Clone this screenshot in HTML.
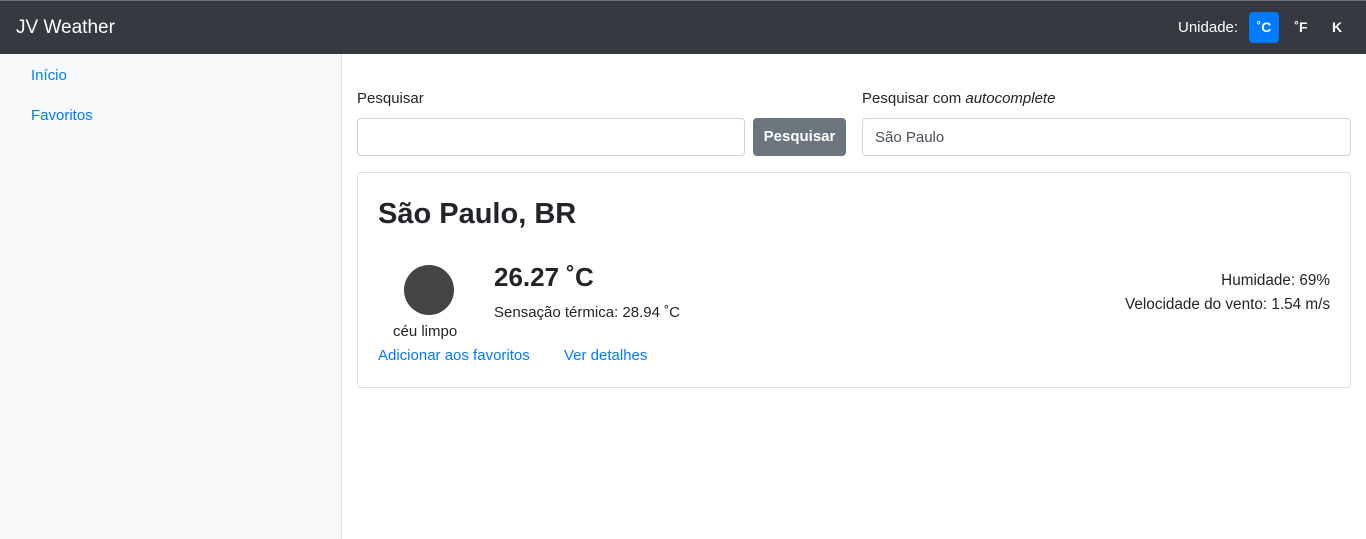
<!DOCTYPE html>
<html><head><meta charset="utf-8"><style>
*{box-sizing:border-box;margin:0;padding:0}
body{width:1366px;height:539px;overflow:hidden;font-family:"Liberation Sans",sans-serif;font-size:15px;color:#212529;background:#fff;position:relative}
.nav{position:absolute;left:0;top:0;width:1366px;height:54px;background:#343a40;border-top:1px solid #6c7177}
.brand{position:absolute;left:16px;top:16px;color:#fff;font-size:19px}
.unid{position:absolute;left:1178px;top:18px;color:#fff;font-size:15px}
.u{position:absolute;top:11px;width:30px;height:31px;border-radius:4px;color:#fff;font-weight:bold;font-size:14px;text-align:center;line-height:31px}
.side{position:absolute;left:0;top:54px;width:342px;height:485px;background:#f8f9fa;border-right:1px solid #dee2e6}
.side a{position:absolute;left:31px;color:#007bff;text-decoration:none;font-size:15px}
.lbl{position:absolute;top:90px;font-size:15px}
.inp{position:absolute;top:118px;height:38px;border:1px solid #ced4da;border-radius:4px;background:#fff;padding:0 12px;line-height:38px;font-size:15px;color:#495057}
.btn{position:absolute;left:753px;top:118px;width:93px;height:38px;background:#6c757d;border-radius:4px;color:#fff;font-size:15px;text-align:center;line-height:38px;font-weight:bold}
.card{position:absolute;left:357px;top:172px;width:994px;height:216px;border:1px solid #dfdfdf;border-radius:4px}
.a{color:#007bff;position:absolute;font-size:15px}
</style></head><body>
<div class="nav"><div class="brand">JV Weather</div><div class="unid">Unidade:</div>
<div class="u" style="left:1249px;background:#007bff">˚C</div>
<div class="u" style="left:1286px">˚F</div>
<div class="u" style="left:1322px">K</div></div>
<div class="side"><a style="top:13px">Início</a><a style="top:53px">Favoritos</a></div>
<div class="lbl" style="left:357px">Pesquisar</div>
<div class="lbl" style="left:862px">Pesquisar com <i>autocomplete</i></div>
<div class="inp" style="left:357px;width:388px"></div>
<div class="btn">Pesquisar</div>
<div class="inp" style="left:862px;width:489px">São Paulo</div>
<div class="card">
<div style="position:absolute;left:20px;top:25px;font-size:29px;font-weight:bold">São Paulo, BR</div>
<div style="position:absolute;left:46px;top:92px;width:50px;height:50px;border-radius:50%;background:#444"></div>
<div style="position:absolute;left:35px;top:150px">céu limpo</div>
<div style="position:absolute;left:136px;top:89px;font-size:26px;font-weight:bold">26.27 ˚C</div>
<div style="position:absolute;left:136px;top:131px;font-size:15px">Sensação térmica: 28.94 ˚C</div>
<div style="position:absolute;right:20px;top:96px;text-align:right;line-height:24px;font-size:15.3px">Humidade: 69%<br>Velocidade do vento: 1.54 m/s</div>
<div class="a" style="left:20px;top:174px">Adicionar aos favoritos</div>
<div class="a" style="left:206px;top:174px">Ver detalhes</div>
</div>
</body></html>
